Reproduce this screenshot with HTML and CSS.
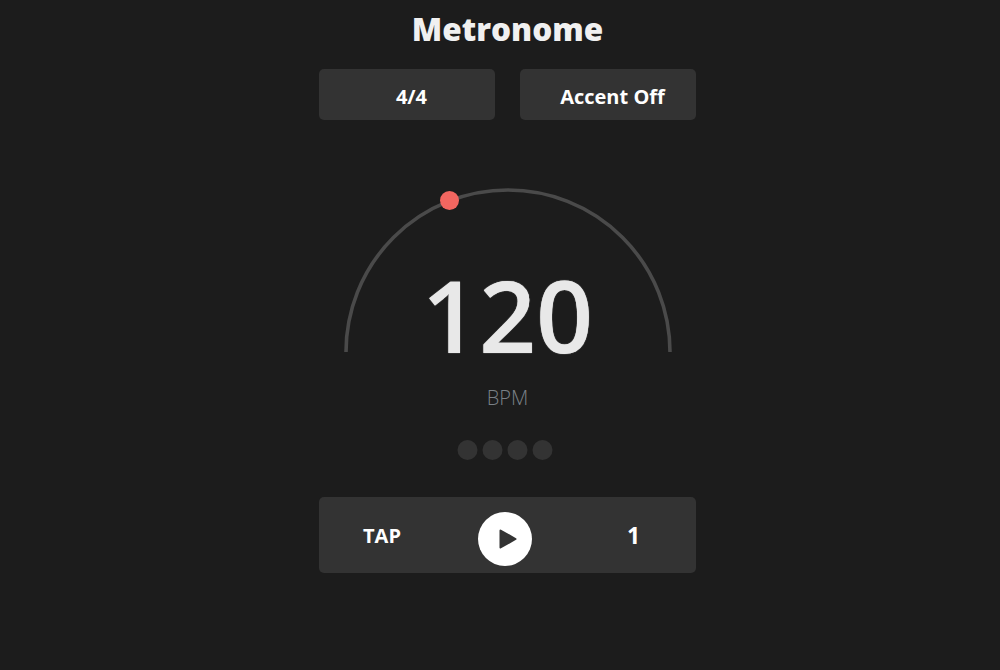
FILE: index.html
```html
<!DOCTYPE html>
<html lang="en">
<head>
    <meta charset="UTF-8">
    <title>Metronome</title>
    <link rel="stylesheet" href="styles.css">
</head>
<body>
    <div class="container">
        <h1 class="title">Metronome</h1>

        <!-- meter and accent -->
        <div class="options">
            <button class="option-btn">4/4</button>
            <button class="option-btn">Accent Off</button>
        </div>

        <!-- tempo dial -->
        <div class="dial">
            <svg class="dial-arc" width="330" height="170" viewBox="0 0 330 170">
                <path d="M3 166 A162 162 0 0 1 327 166" fill="none" stroke="#4a4a4a" stroke-width="3.6"/>
            </svg>
            <div class="dial-knob"></div>
            <div class="bpm-value">120</div>
        </div>
        <div class="bpm-label">BPM</div>

        <div class="beats">
            <span class="beat"></span>
            <span class="beat"></span>
            <span class="beat"></span>
            <span class="beat"></span>
        </div>

        <!-- transport -->
        <div class="controls">
            <button class="tap-btn">TAP</button>
            <button class="play-btn">
                <svg width="18" height="20" viewBox="0 0 18 20">
                    <path d="M1.5 1.5 L16.5 10 L1.5 18.5 Z" fill="#333" stroke="#333" stroke-width="2" stroke-linejoin="round"/>
                </svg>
            </button>
            <div class="beat-count">1</div>
        </div>
    </div>
</body>
</html>
```

FILE: styles.css
```css
body, html {
    margin: 0;
    padding: 0;
    height: 100%;
    overflow: hidden;
    font-family: "Open Sans", "Liberation Sans", sans-serif;
    background: #1c1c1c;
    color: #f0f0f0;
}

body {
    padding-left: 15px;
    box-sizing: border-box;
}

.container {
    width: 377px;
    margin: 0 auto;
}

button {
    font-family: inherit;
    border: none;
    background: none;
    color: #fff;
    padding: 0;
}

.title {
    margin: 0;
    padding-top: 8px;
    font-size: 31.5px;
    line-height: 42px;
    font-weight: 800;
    text-align: center;
}

.options {
    display: flex;
    gap: 25px;
    margin-top: 19px;
}

.option-btn {
    width: 176px;
    height: 51px;
    padding: 4px 0 0 9px;
    background: #333;
    border-radius: 5px;
    font-size: 20px;
    font-weight: 700;
}

.dial {
    position: relative;
    width: 330px;
    height: 170px;
    margin: 66px auto 0;
}

.dial-arc {
    display: block;
}

.dial-knob {
    position: absolute;
    left: 97.5px;
    top: 5px;
    width: 19px;
    height: 19px;
    border-radius: 50%;
    background: #f26660;
}

.bpm-value {
    position: absolute;
    left: 0;
    right: 0;
    top: 60px;
    font-size: 100px;
    line-height: 136px;
    font-weight: 600;
    text-shadow: 0 0 1px #e8e8e8;
    text-align: center;
    color: #e8e8e8;
}

.bpm-label {
    margin-top: 30px;
    font-size: 20px;
    line-height: 24px;
    font-weight: 300;
    text-align: center;
    color: #7a8087;
}

.beats {
    display: flex;
    justify-content: center;
    margin-top: 30px;
    transform: translateX(-0.5px);
}

.beat {
    width: 20px;
    height: 20px;
    margin-right: 5px;
    border-radius: 50%;
    background: #333;
}

.controls {
    display: flex;
    align-items: center;
    height: 76px;
    margin-top: 37px;
    padding-left: 44px;
    box-sizing: border-box;
    background: #333;
    border-radius: 5px;
}

.tap-btn {
    font-size: 20px;
    font-weight: 700;
}

.play-btn {
    display: flex;
    align-items: center;
    justify-content: center;
    width: 54px;
    height: 54px;
    margin: 8px 95px 0 77px;
    padding-left: 6px;
    border-radius: 50%;
    background: #fff;
}

.beat-count {
    font-size: 23px;
    font-weight: 700;
    color: #fff;
}
```
